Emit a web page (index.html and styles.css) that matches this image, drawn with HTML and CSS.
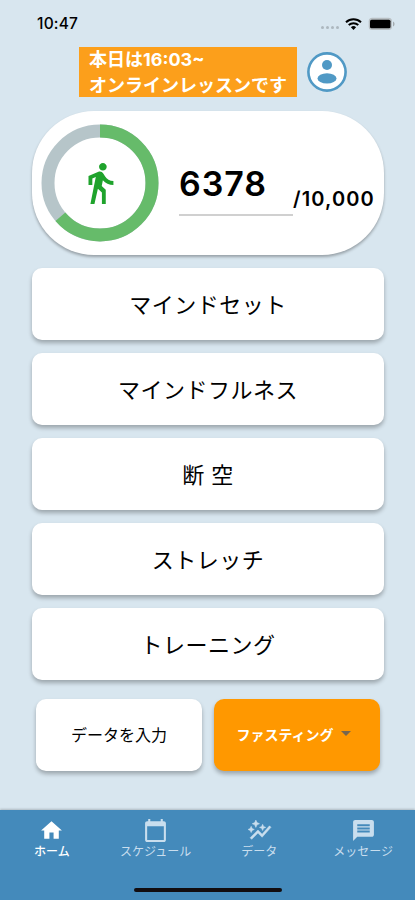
FILE: index.html
```
<!DOCTYPE html>
<html lang="ja">

<head>
    <meta charset="UTF-8">
    <title>ホーム</title>
    <link rel="stylesheet" href="styles.css">
</head>

<body>
    <div class="status-bar">
        <span class="time">10:47</span>
        <div class="status-icons">
            <div class="signal"><i></i><i></i><i></i><i></i></div>
            <svg class="wifi" viewBox="0 0 17 12">
                <path d="M1 4.3a11 11 0 0 1 15 0M3.7 7a7.2 7.2 0 0 1 9.6 0" fill="none" stroke="#000" stroke-width="2" />
                <path d="M5.9 9.2a4 4 0 0 1 5.2 0L8.5 12z" />
            </svg>
            <svg class="battery" viewBox="0 0 27 14">
                <rect x=".7" y=".7" width="23.3" height="12.4" rx="3.6" fill="#b8bfc3" />
                <rect x="2" y="2.7" width="20.5" height="8.6" rx="1.6" />
                <path d="M25 4.5c2 .8 2 4.2 0 5z" fill="#a4abaf" />
            </svg>
        </div>
    </div>

    <header>
        <div class="notice">
            <div>本日は16:03~</div>
            <div>オンラインレッスンです</div>
        </div>
        <svg class="avatar" viewBox="0 0 40 40">
            <circle cx="20" cy="20" r="18.6" fill="#fff" stroke="#5099c5" stroke-width="2.6" />
            <circle cx="20" cy="13" r="5" fill="#5099c5" />
            <ellipse cx="20" cy="26.4" rx="9.5" ry="5.2" fill="#5099c5" />
        </svg>
    </header>

    <main>
        <!-- Steps -->
        <section class="steps">
            <div class="ring">
                <svg class="ring-chart" viewBox="0 0 118 118">
                    <circle cx="59" cy="59" r="52" fill="none" stroke="#b6c5c9" stroke-width="13" />
                    <circle cx="59" cy="59" r="52" fill="none" stroke="#66bb6a" stroke-width="13" pathLength="100"
                        stroke-dasharray="63.78 100" transform="rotate(-90 59 59)" />
                </svg>
                <svg class="walk" viewBox="0 0 24 24">
                    <path d="M13.5 5.5c1.1 0 2-.9 2-2s-.9-2-2-2-2 .9-2 2 .9 2 2 2zM9.8 8.9L7 23h2.1l1.8-8 2.1 2v6h2v-7.5l-2.1-2 .6-3C14.8 12 16.8 13 19 13v-2c-1.9 0-3.5-1-4.3-2.4l-1-1.6c-.4-.6-1-1-1.7-1-.3 0-.5.1-.8.1L6 8.3V13h2V9.6l1.8-.7" />
                </svg>
            </div>
            <div class="count">6378</div>
            <div class="goal">/10,000</div>
        </section>

        <!-- Menu -->
        <div class="btn">マインドセット</div>
        <div class="btn">マインドフルネス</div>
        <div class="btn">断 空</div>
        <div class="btn">ストレッチ</div>
        <div class="btn">トレーニング</div>

        <div class="row">
            <div class="btn small">データを入力</div>
            <div class="btn small orange">ファスティング<span class="arrow"></span></div>
        </div>
    </main>

    <nav>
        <div class="tabs">
            <div class="tab active">
                <svg viewBox="0 0 24 24"><path d="M10 20v-6h4v6h5v-8h3L12 3 2 12h3v8z" /></svg>
                <span>ホーム</span>
            </div>
            <div class="tab">
                <svg viewBox="0 0 24 24"><path d="M20 3h-1V1h-2v2H7V1H5v2H4c-1.1 0-2 .9-2 2v16c0 1.1.9 2 2 2h16c1.1 0 2-.9 2-2V5c0-1.1-.9-2-2-2zm0 18H4V8h16v13z" /></svg>
                <span>スケジュール</span>
            </div>
            <div class="tab">
                <svg viewBox="0 0 24 24"><path d="M14.06 9.94L12 9l2.06-.94L15 6l.94 2.06L18 9l-2.06.94L15 12l-.94-2.06zM4 14l.94-2.06L7 11l-2.06-.94L4 8l-.94 2.06L1 11l2.06.94L4 14zm4.5-5l1.09-2.41L12 5.5 9.59 4.41 8.5 2 7.41 4.41 5 5.5l2.41 1.09L8.5 9zm-4 11.5l6-6.01 4 4L23 8.93l-1.41-1.41-7.09 7.97-4-4L3 19l1.5 1.5z" stroke="currentColor" stroke-width=".5" /></svg>
                <span>データ</span>
            </div>
            <div class="tab">
                <svg viewBox="0 0 24 24"><path d="M20 2H4c-1.1 0-1.99.9-1.99 2L2 22l4-4h14c1.1 0 2-.9 2-2V4c0-1.1-.9-2-2-2zm-2 12H6v-2h12v2zm0-3H6V9h12v2zm0-3H6V6h12v2z" /></svg>
                <span>メッセージ</span>
            </div>
        </div>
        <div class="home-bar"></div>
    </nav>
</body>

</html>
```
FILE: styles.css
```
* {
    box-sizing: border-box;
}

body {
    margin: 0;
    height: 900px;
    display: flex;
    flex-direction: column;
    background: #d8e6ef;
    color: #000;
    font-family: Inter, "Noto Sans CJK JP", sans-serif;
    overflow: hidden;
}

svg {
    display: block;
    flex-shrink: 0;
}

.status-bar {
    height: 47px;
    padding: 0 20px 0 37px;
    display: flex;
    justify-content: space-between;
    align-items: center;
}

.time {
    font-size: 15.5px;
    font-weight: 500;
    letter-spacing: 0.2px;
}

.status-icons {
    display: flex;
    align-items: center;
}

.signal {
    display: flex;
    gap: 2px;
    margin: 7px 6px 0 0;
}

.signal i {
    width: 3px;
    height: 3px;
    border-radius: 50%;
    background: #adb8bf;
}

.wifi {
    width: 17px;
    height: 12px;
    margin-right: 6px;
}

.battery {
    width: 27px;
    height: 14px;
}

header {
    display: flex;
    align-items: center;
    gap: 10px;
    padding-left: 79px;
}

.notice {
    width: 218px;
    height: 50px;
    padding-left: 10px;
    background: #fc9f1b;
    color: #fff;
    font-size: 18px;
    font-weight: 700;
    line-height: 26px;
    white-space: nowrap;
}

.avatar {
    width: 40px;
    height: 40px;
}

main {
    flex: 1;
    padding: 14px 31px 0 32px;
}

.steps {
    height: 144px;
    margin-bottom: 13px;
    padding-left: 9px;
    display: flex;
    align-items: center;
    background: #fff;
    border-radius: 62px;
    box-shadow: 0 2px 3px rgba(0, 0, 0, 0.3);
}

.ring {
    display: grid;
    place-items: center;
    margin-right: 20px;
}

.ring svg {
    grid-area: 1 / 1;
}

.ring-chart {
    width: 118px;
    height: 118px;
}

.walk {
    width: 46px;
    height: 46px;
    fill: #1fa32c;
}

.count {
    width: 114px;
    height: 50px;
    margin-top: 15px;
    border-bottom: 2px solid #d0d0d0;
    font-size: 34px;
    font-weight: 600;
    line-height: 35px;
    letter-spacing: 0.9px;
}

.goal {
    margin-top: 31px;
    font-size: 20px;
    font-weight: 600;
    letter-spacing: 1.1px;
}

.btn {
    height: 72px;
    margin-bottom: 13px;
    padding-bottom: 3px;
    display: flex;
    align-items: center;
    justify-content: center;
    background: #fff;
    border-radius: 10px;
    box-shadow: 0 3px 4px rgba(0, 0, 0, 0.28);
    font-size: 22px;
    letter-spacing: 0.5px;
}

.row {
    display: flex;
    justify-content: space-between;
    padding: 6px 4px 0;
}

.small {
    width: 166px;
    font-size: 16px;
    letter-spacing: 0;
}

.orange {
    padding-right: 7px;
    background: #ff9800;
    color: #fff;
    font-size: 14px;
    font-weight: 700;
}

.arrow {
    margin-left: 7px;
    border: 5px solid transparent;
    border-top-color: #76664f;
    border-bottom: 0;
}

nav {
    height: 90px;
    background: #448abb;
    box-shadow: 0 -1px 2px rgba(0, 0, 0, 0.2);
}

.tabs {
    display: grid;
    grid-template-columns: repeat(4, 1fr);
    height: 78px;
    padding-top: 8px;
}

.tab {
    display: flex;
    flex-direction: column;
    align-items: center;
    color: #c9deee;
    font-size: 12px;
    line-height: 17px;
}

.tab svg {
    width: 25px;
    height: 25px;
    fill: currentColor;
}

.active {
    color: #fff;
    font-weight: 500;
}

.home-bar {
    width: 148px;
    height: 4px;
    margin: 0 auto;
    border-radius: 2px;
    background: #120d10;
}
```
